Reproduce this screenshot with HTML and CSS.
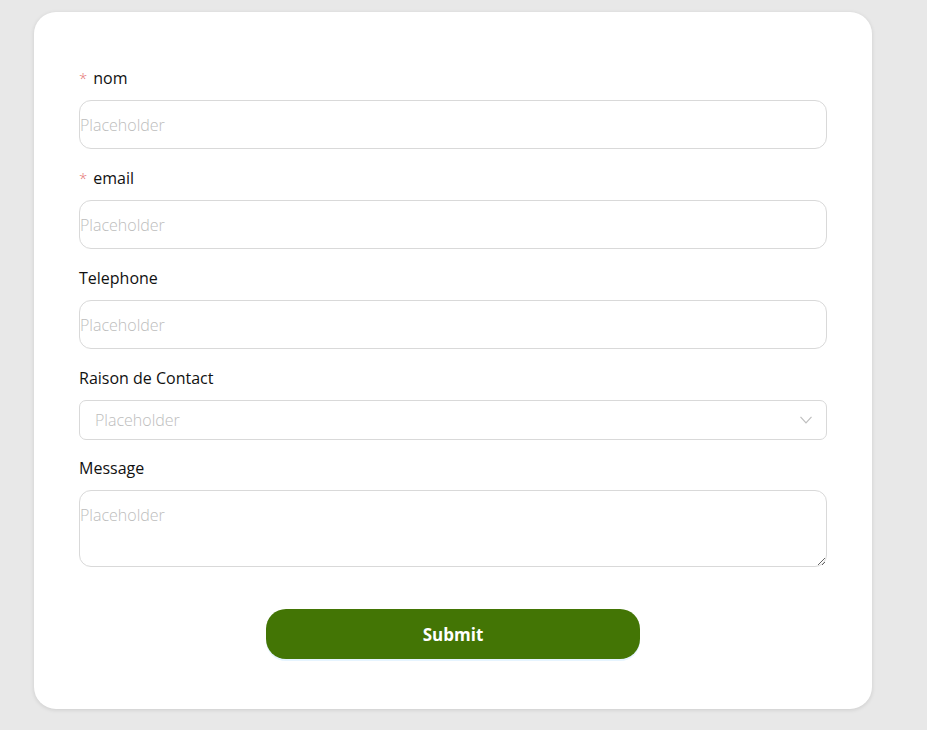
FILE: index.html
```html
<!DOCTYPE html>
<html lang="fr">
<head>
<meta charset="utf-8">
<title>Contact</title>
<link rel="stylesheet" href="styles.css">
</head>
<body>
<div class="card">
  <form class="form">
    <div class="field">
      <label class="label"><span class="req">*</span>nom</label>
      <input class="input" type="text" placeholder="Placeholder">
    </div>
    <div class="field">
      <label class="label"><span class="req">*</span>email</label>
      <input class="input" type="text" placeholder="Placeholder">
    </div>
    <div class="field">
      <label class="label">Telephone</label>
      <input class="input" type="text" placeholder="Placeholder">
    </div>
    <div class="field field-select">
      <label class="label">Raison de Contact</label>
      <div class="select">
        <span class="select-ph">Placeholder</span>
        <svg class="chev" width="12" height="8" viewBox="0 0 12 8"><path d="M0.5 0.8 L6 6.8 L11.5 0.8" fill="none" stroke="#bfbfbf" stroke-width="1.2"/></svg>
      </div>
    </div>
    <div class="field">
      <label class="label">Message</label>
      <textarea class="textarea" placeholder="Placeholder"></textarea>
    </div>
    <div class="actions">
      <button class="btn" type="button">Submit</button>
    </div>
  </form>
</div>
</body>
</html>
```
FILE: styles.css
```css
html, body {
  margin: 0;
  padding: 0;
}
body {
  background: #e8e8e8;
  font-family: "Open Sans", "Noto Sans", sans-serif;
  font-size: 16px;
  color: #1f1f1f;
  padding: 12px 55px 20px 34px;
}
.card {
  background: #fff;
  border-radius: 22px;
  box-shadow: 0 1px 4px rgba(0,0,0,0.12);
  padding: 55px 45px 50px 45px;
  width: 748px;
}
.form {
  display: flex;
  flex-direction: column;
}
.field {
  display: flex;
  flex-direction: column;
  margin-bottom: 18px;
}
.field-select {
  margin-bottom: 17px;
}
.label {
  height: 22px;
  line-height: 22px;
  margin-bottom: 11px;
  color: #111;
}
.req {
  color: #e57373;
  font-weight: 300;
  font-size: 15px;
  margin-right: 6px;
}
.input, .textarea {
  box-sizing: border-box;
  width: 100%;
  border: 1px solid #d9d9d9;
  border-radius: 12px;
  font-family: inherit;
  font-size: 16px;
  font-weight: 300;
  padding: 0;
  outline: none;
  background: #fff;
}
.input {
  height: 49px;
}
.textarea {
  height: 77px;
  padding-top: 13px;
  resize: vertical;
}
.input::placeholder, .textarea::placeholder {
  color: #bdbdbd;
}
.select {
  box-sizing: border-box;
  height: 40px;
  border: 1px solid #d9d9d9;
  border-radius: 7px;
  display: flex;
  align-items: center;
  justify-content: space-between;
  padding: 0 14px 0 15px;
}
.select-ph {
  color: #bdbdbd;
  font-weight: 300;
}
.actions {
  display: flex;
  justify-content: center;
  margin-top: 24px;
}
.btn {
  width: 374px;
  height: 50px;
  border: none;
  border-radius: 20px;
  background: #437505;
  color: #fff;
  font-family: inherit;
  font-size: 17px;
  font-weight: 700;
  box-shadow: 0 2px 0 rgba(5,145,255,0.1);
}
```
